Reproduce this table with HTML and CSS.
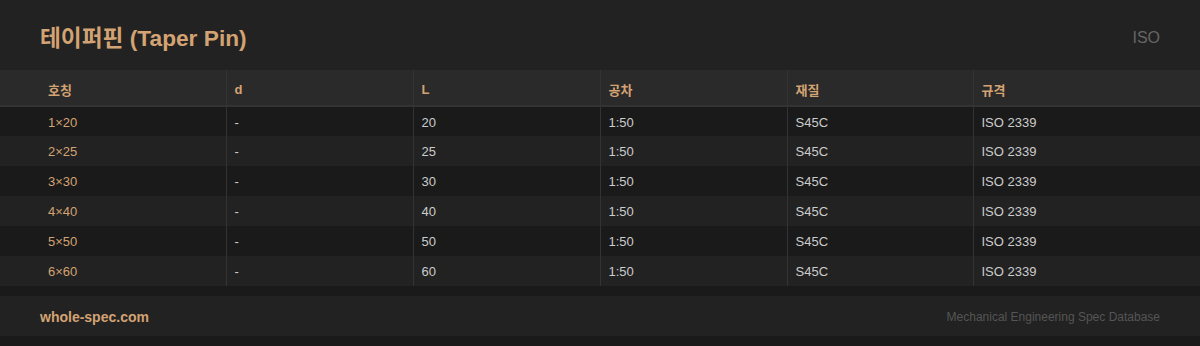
FILE: index.html
```html
<!DOCTYPE html>
<html lang="ko">
<head>
<meta charset="utf-8">
<link rel="stylesheet" href="styles.css">
</head>
<body>
<div class="page">
  <header class="top">
    <h1 class="title">테이퍼핀 (Taper Pin)</h1>
    <span class="std">ISO</span>
  </header>
  <table class="spec">
    <colgroup>
      <col class="c1"><col class="c2"><col class="c3"><col class="c4"><col class="c5"><col class="c6">
    </colgroup>
    <thead>
      <tr><th>호칭</th><th>d</th><th>L</th><th>공차</th><th>재질</th><th>규격</th></tr>
    </thead>
    <tbody>
      <tr><td>1×20</td><td>-</td><td>20</td><td>1:50</td><td>S45C</td><td>ISO 2339</td></tr>
      <tr><td>2×25</td><td>-</td><td>25</td><td>1:50</td><td>S45C</td><td>ISO 2339</td></tr>
      <tr><td>3×30</td><td>-</td><td>30</td><td>1:50</td><td>S45C</td><td>ISO 2339</td></tr>
      <tr><td>4×40</td><td>-</td><td>40</td><td>1:50</td><td>S45C</td><td>ISO 2339</td></tr>
      <tr><td>5×50</td><td>-</td><td>50</td><td>1:50</td><td>S45C</td><td>ISO 2339</td></tr>
      <tr><td>6×60</td><td>-</td><td>60</td><td>1:50</td><td>S45C</td><td>ISO 2339</td></tr>
    </tbody>
  </table>
  <footer class="foot">
    <span class="site">whole-spec.com</span>
    <span class="tag">Mechanical Engineering Spec Database</span>
  </footer>
</div>
</body>
</html>
```
FILE: styles.css
```css
html, body {
  margin: 0;
  padding: 0;
  background: #1a1a1a;
}
body {
  font-family: "Liberation Sans", Arial, "Noto Sans CJK KR", sans-serif;
  width: 1200px;
  height: 346px;
  overflow: hidden;
}
.top {
  height: 70px;
  background: #222222;
  display: flex;
  align-items: center;
  justify-content: space-between;
  padding: 0 40px;
  box-sizing: border-box;
}
.title {
  margin: 0;
  font-size: 22.7px;
  font-weight: 700;
  color: #d4a373;
  padding-top: 2px;
}
.std {
  font-size: 16px;
  color: #666666;
  padding-top: 6px;
}
.spec {
  width: 1200px;
  border-collapse: collapse;
  table-layout: fixed;
  font-size: 13px;
}
.c1 { width: 226px; }
.c2 { width: 187px; }
.c3 { width: 187px; }
.c4 { width: 187px; }
.c5 { width: 186px; }
.c6 { width: 227px; }
.spec th {
  height: 36px;
  background: #2a2a2a;
  color: #d4a373;
  font-weight: 700;
  text-align: left;
  padding: 3px 8px 0;
  border-bottom: 2px solid #333333;
  border-left: 1px solid #333333;
  box-sizing: border-box;
}
.spec td {
  height: 30px;
  padding: 1px 8px 0;
  color: #cccccc;
  text-align: left;
  border-left: 1px solid #333333;
  box-sizing: border-box;
}
.spec th:first-child, .spec td:first-child {
  border-left: none;
  padding-left: 48px;
}
.spec td:first-child {
  color: #d4a373;
}
.spec th:last-child, .spec td:last-child {
  padding-right: 40px;
}
.spec tbody tr:nth-child(odd) { background: #1a1a1a; }
.spec tbody tr:nth-child(even) { background: #222222; }
.foot {
  margin-top: 10px;
  height: 40px;
  background: #222222;
  display: flex;
  align-items: center;
  justify-content: space-between;
  padding: 0 40px;
  box-sizing: border-box;
}
.site {
  font-size: 14px;
  font-weight: 700;
  color: #d4a373;
  padding-top: 1px;
}
.tag {
  font-size: 12px;
  color: #555555;
  padding-top: 2px;
}
```
